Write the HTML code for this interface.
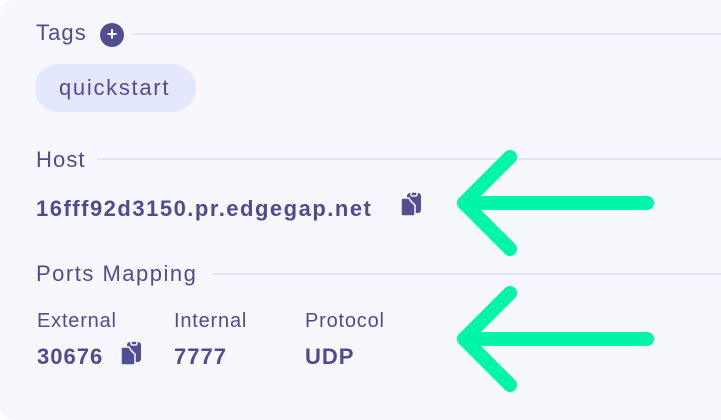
<!DOCTYPE html>
<html><head><style>
body{margin:0;width:721px;height:405px;background:#fff;overflow:hidden;font-family:"Liberation Sans",sans-serif;color:#4f4b8e}
.card{position:absolute;left:0;top:0;width:740px;height:420px;background:#f7f8fe;border-radius:14px}
.t{position:absolute;white-space:nowrap}
.n{font-size:22px;letter-spacing:1.1px}
.line{position:absolute;height:2px;background:#e3e5f5}
</style></head><body>
<div class="card"></div>
<div class="t n" style="left:36px;top:20px">Tags</div>
<div style="position:absolute;left:100px;top:23px;width:24px;height:24px;border-radius:50%;background:#524e92;color:#fff;font-size:18px;font-weight:bold;text-align:center;line-height:23px">+</div>
<div class="line" style="left:132px;top:33px;width:600px"></div>
<div style="position:absolute;left:35px;top:64px;width:161px;height:48px;border-radius:24px;background:#e4e8fc"></div>
<div class="t n" style="left:59px;top:75px;letter-spacing:1.7px">quickstart</div>
<div class="t n" style="left:36px;top:147px">Host</div>
<div class="line" style="left:97px;top:158px;width:640px"></div>
<div class="t" style="left:36px;top:196px;font-size:22px;font-weight:bold;letter-spacing:1.5px">16fff92d3150.pr.edgegap.net</div>
<div class="t n" style="left:36px;top:261px;letter-spacing:1.5px">Ports Mapping</div>
<div class="line" style="left:212px;top:273px;width:520px"></div>
<div class="t" style="left:37px;top:310px;font-size:20px;letter-spacing:0.8px">External</div>
<div class="t" style="left:174px;top:310px;font-size:20px;letter-spacing:0.8px">Internal</div>
<div class="t" style="left:305px;top:310px;font-size:20px;letter-spacing:0.8px">Protocol</div>
<div class="t" style="left:37px;top:344px;font-size:22px;font-weight:bold;letter-spacing:1px">30676</div>
<div class="t" style="left:174px;top:344px;font-size:22px;font-weight:bold;letter-spacing:1px">7777</div>
<div class="t" style="left:305px;top:344px;font-size:22px;font-weight:bold;letter-spacing:1px">UDP</div>
<svg width="721" height="405" style="position:absolute;left:0;top:0">
<defs><g id="cp"><rect x="6" y="0" width="14" height="20" rx="3" fill="#524e92"/><rect x="10" y="-1" width="6" height="4" rx="1.5" fill="#524e92" stroke="#f7f8fe" stroke-width="1.5"/><path d="M0 7 Q0 5 2 5 L8 5 Q10 9 14 12 L14 21 Q14 23 12 23 L2 23 Q0 23 0 21 Z" fill="#524e92" stroke="#f7f8fe" stroke-width="1.5"/></g></defs>
<use href="#cp" transform="translate(401,193)"/>
<use href="#cp" transform="translate(121,342)"/>
<g stroke="#00f5a9" stroke-width="14" stroke-linecap="round" stroke-linejoin="round" fill="none">
<path d="M647 203 H466 M510 157 L464 203 L510 249"/>
<path d="M647 339 H466 M510 293 L464 339 L510 385"/>
</g>
</svg>
</body></html>
